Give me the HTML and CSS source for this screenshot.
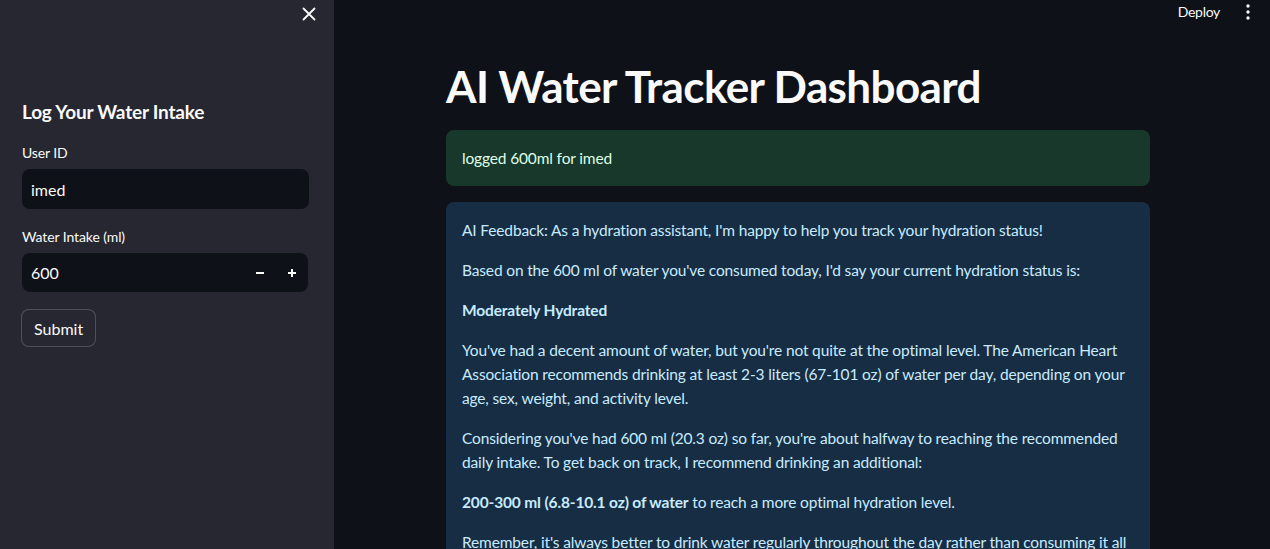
FILE: index.html
```html
<!DOCTYPE html>
<html>
<head>
<meta charset="utf-8">
<link rel="stylesheet" href="styles.css">
</head>
<body>
<div class="app">
  <aside class="sidebar">
    <div class="sidebar-top">
      <button class="close-btn" aria-label="Close sidebar">
        <svg width="14" height="14" viewBox="0 0 14 14"><path d="M1.5 1.5 L12.5 12.5 M12.5 1.5 L1.5 12.5" stroke="#fafafa" stroke-width="1.8" stroke-linecap="round"/></svg>
      </button>
    </div>
    <div class="sidebar-body">
      <h2 class="side-title">Log Your Water Intake</h2>
      <label class="field-label">User ID</label>
      <div class="input-box"><span>imed</span></div>
      <label class="field-label">Water Intake (ml)</label>
      <div class="input-box number">
        <span>600</span>
        <div class="steps">
          <span class="step">
            <svg width="10" height="10" viewBox="0 0 10 10"><path d="M1 5 H9" stroke="#fafafa" stroke-width="2"/></svg>
          </span>
          <span class="step">
            <svg width="10" height="10" viewBox="0 0 10 10"><path d="M1 5 H9 M5 1 V9" stroke="#fafafa" stroke-width="2"/></svg>
          </span>
        </div>
      </div>
      <button class="submit">Submit</button>
    </div>
  </aside>
  <main class="main">
    <header class="topbar">
      <span class="deploy">Deploy</span>
      <span class="kebab">
        <svg width="4" height="16" viewBox="0 0 4 16"><circle cx="2" cy="2" r="1.7" fill="#fafafa"/><circle cx="2" cy="8" r="1.7" fill="#fafafa"/><circle cx="2" cy="14" r="1.7" fill="#fafafa"/></svg>
      </span>
    </header>
    <div class="content">
      <h1 class="title">AI Water Tracker Dashboard</h1>
      <div class="alert success"><p>logged 600ml for imed</p></div>
      <div class="alert info">
        <p>AI Feedback: As a hydration assistant, I'm happy to help you track your hydration status!</p>
        <p>Based on the 600 ml of water you've consumed today, I'd say your current hydration status is:</p>
        <p><strong>Moderately Hydrated</strong></p>
        <p>You've had a decent amount of water, but you're not quite at the optimal level. The American Heart Association recommends drinking at least 2-3 liters (67-101 oz) of water per day, depending on your age, sex, weight, and activity level.</p>
        <p>Considering you've had 600 ml (20.3 oz) so far, you're about halfway to reaching the recommended daily intake. To get back on track, I recommend drinking an additional:</p>
        <p><strong>200-300 ml (6.8-10.1 oz) of water</strong> to reach a more optimal hydration level.</p>
        <p>Remember, it's always better to drink water regularly throughout the day rather than consuming it all at once.</p>
      </div>
    </div>
  </main>
</div>
</body>
</html>
```

FILE: styles.css
```css
* { box-sizing: border-box; }
html, body {
  margin: 0;
  padding: 0;
  height: 100%;
  overflow: hidden;
  background: #0e1117;
  color: #fafafa;
  font-family: Lato, "Noto Sans", sans-serif;
}
.app {
  display: flex;
  height: 549px;
}
.sidebar {
  width: 334px;
  flex: 0 0 334px;
  background: #262730;
  display: flex;
  flex-direction: column;
}
.sidebar-top {
  height: 60px;
  display: flex;
  justify-content: flex-end;
  padding: 5px 16px 0 0;
}
.close-btn {
  background: none;
  border: none;
  width: 18px;
  height: 18px;
  padding: 0;
  display: flex;
  align-items: center;
  justify-content: center;
}
.sidebar-body {
  padding: 37px 25px 0 21px;
  display: flex;
  flex-direction: column;
  align-items: flex-start;
}
.side-title {
  margin: 0 0 16px 1px;
  font-size: 19px;
  font-weight: 700;
  line-height: 30px;
  letter-spacing: -0.2px;
}
.field-label {
  font-size: 14px;
  line-height: 20px;
  margin: 0 0 7px 1px;
  letter-spacing: -0.1px;
}
.input-box {
  width: 287px;
  height: 40px;
  margin-left: 1px;
  background: #0e1117;
  border-radius: 8px;
  display: flex;
  align-items: center;
  padding: 0 0 0 9px;
  font-size: 16px;
  margin-bottom: 18px;
  margin-top: -1px;
}
.input-box.number {
  width: 286px;
  height: 39px;
  margin-bottom: 17px;
}
.steps {
  margin-left: auto;
  display: flex;
  height: 100%;
}
.step {
  width: 32px;
  display: flex;
  align-items: center;
  justify-content: center;
}
.submit {
  background: #262730;
  color: #fafafa;
  border: 1px solid rgba(250, 250, 250, 0.2);
  border-radius: 8px;
  height: 38px;
  padding: 0 12px;
  font-family: inherit;
  font-size: 16px;
}
.main {
  flex: 1;
  display: flex;
  flex-direction: column;
  padding-right: 8px;
  position: relative;
}
.topbar {
  height: 60px;
  display: flex;
  justify-content: flex-end;
  align-items: flex-start;
  padding: 3px 12px 0 0;
}
.deploy {
  font-size: 14px;
  line-height: 18px;
  margin-right: 26px;
  letter-spacing: -0.3px;
}
.kebab {
  display: flex;
  align-items: center;
  height: 18px;
}
.content {
  width: 704px;
  align-self: center;
  padding-top: 37px;
}
.title {
  margin: 0 0 16px 0;
  font-size: 44px;
  font-weight: 700;
  line-height: 56px;
  letter-spacing: -0.6px;
}
.alert {
  border-radius: 8px;
  padding: 16px;
  font-size: 15.5px;
  line-height: 24px;
  margin-bottom: 16px;
  letter-spacing: -0.15px;
}
.alert p { margin: 0 0 16px 0; }
.alert p:last-child { margin-bottom: 0; }
.alert strong { font-weight: 700; }
.success {
  background: #17382a;
  color: rgb(223, 253, 233);
}
.info {
  background: #172d43;
  color: rgb(199, 235, 255);
}
```
